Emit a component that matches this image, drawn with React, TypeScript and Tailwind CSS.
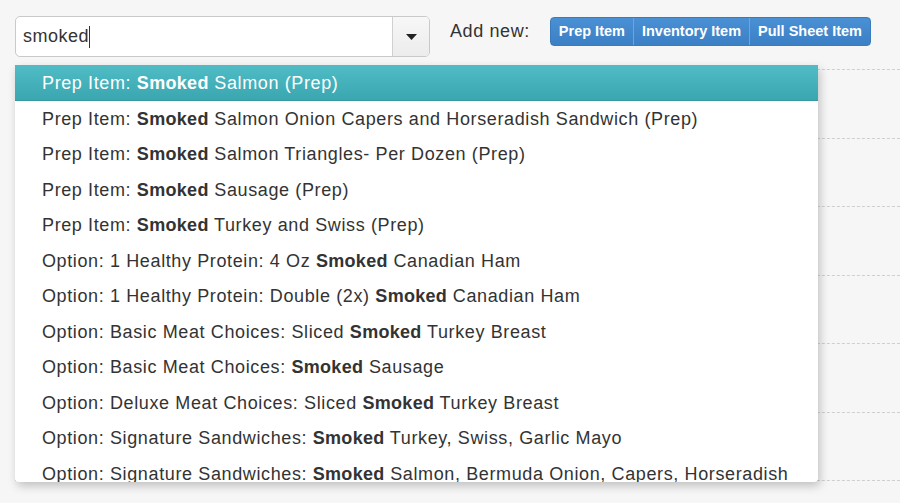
import React from "react";

const items: [string, string][] = [
  ["Prep Item: ", " Salmon (Prep)"],
  ["Prep Item: ", " Salmon Onion Capers and Horseradish Sandwich (Prep)"],
  ["Prep Item: ", " Salmon Triangles- Per Dozen (Prep)"],
  ["Prep Item: ", " Sausage (Prep)"],
  ["Prep Item: ", " Turkey and Swiss (Prep)"],
  ["Option: 1 Healthy Protein: 4 Oz ", " Canadian Ham"],
  ["Option: 1 Healthy Protein: Double (2x) ", " Canadian Ham"],
  ["Option: Basic Meat Choices: Sliced ", " Turkey Breast"],
  ["Option: Basic Meat Choices: ", " Sausage"],
  ["Option: Deluxe Meat Choices: Sliced ", " Turkey Breast"],
  ["Option: Signature Sandwiches: ", " Turkey, Swiss, Garlic Mayo"],
  ["Option: Signature Sandwiches: ", " Salmon, Bermuda Onion, Capers, Horseradish"],
];

export default function App() {
  return (
    <div
      className="w-[900px] h-[503px] bg-[#f6f6f6] overflow-hidden relative text-[#333]"
      style={{ fontFamily: '"Liberation Sans", Arial, sans-serif' }}
    >
      <div className="flex items-start pt-[16px] pl-[15px] h-[69px]">
        <div className="flex w-[415px] h-[41px] bg-white border border-[#c9c9c9] rounded-[5px] overflow-hidden">
          <div className="flex-1 flex items-center pl-[7px] text-[18px] tracking-[0.5px]">
            <span>smoked</span>
            <span className="inline-block w-px h-[22px] bg-[#333]" />
          </div>
          <div className="w-[37px] bg-gradient-to-b from-[#f7f7f7] to-[#ececec] border-l border-[#d0d0d0] flex items-center justify-center">
            <svg width="11" height="6" viewBox="0 0 11 6">
              <path d="M0 0 L11 0 L5.5 6 Z" fill="#222" />
            </svg>
          </div>
        </div>
        <div className="ml-[20px] mt-[2px] text-[18px] leading-[26px] tracking-[0.6px]">Add new:</div>
        <div className="ml-[20px] mt-px flex h-[29px] rounded-[4px] overflow-hidden border border-[#3a7bbb] bg-gradient-to-b from-[#4a90d4] to-[#3b80c4] text-white text-[14.5px] font-bold">
          <div className="px-[8px] flex items-center">Prep Item</div>
          <div className="w-px bg-[#6ea4d8]" />
          <div className="px-[8px] flex items-center">Inventory Item</div>
          <div className="w-px bg-[#6ea4d8]" />
          <div className="px-[8px] flex items-center">Pull Sheet Item</div>
        </div>
      </div>

      <div className="ml-[15px] border-t border-dashed border-[#cfcfcf]">
        {Array.from({ length: 7 }).map((_, i) => (
          <div key={i} className="h-[68.5px] border-b border-dashed border-[#cfcfcf]" />
        ))}
      </div>

      <div className="absolute left-[15px] top-[65px] w-[803px] h-[417px] bg-white overflow-hidden rounded-b-[4px] shadow-[2px_4px_10px_rgba(0,0,0,0.22)]">
        {items.map(([pre, post], i) => (
          <div
            key={i}
            className={
              "h-[35.5px] pt-[2px] flex items-center pl-[27px] text-[18px] whitespace-pre " +
              (i === 0
                ? "bg-gradient-to-b from-[#4fbcc6] to-[#3aa6b0] text-white border-b border-[#3598a2]"
                : "")
            }
          >
            <span>
              <span className="tracking-[0.62px]">{pre}</span>
              <b className="font-bold tracking-[0.3px]">Smoked</b>
              <span className="tracking-[0.62px]">{post}</span>
            </span>
          </div>
        ))}
      </div>
    </div>
  );
}
